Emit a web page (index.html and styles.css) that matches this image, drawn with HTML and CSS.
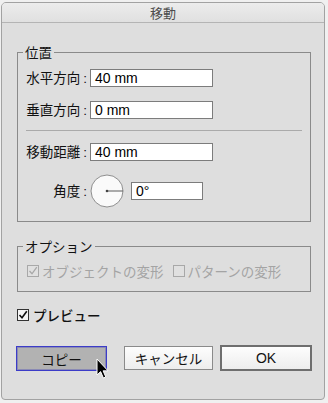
FILE: index.html
```html
<!DOCTYPE html>
<html lang="ja">
<head>
<meta charset="utf-8">
<link rel="stylesheet" href="styles.css">
</head>
<body>
<div class="page">
  <div class="window">
    <div class="titlebar">移動</div>
    <div class="content">
      <fieldset class="group pos">
        <legend>位置</legend>
        <div class="row"><span class="lbl">水平方向<span class="colon">:</span></span><span class="field">40 mm</span></div>
        <div class="row r2"><span class="lbl">垂直方向<span class="colon">:</span></span><span class="field">0 mm</span></div>
        <div class="sep"></div>
        <div class="row"><span class="lbl">移動距離<span class="colon">:</span></span><span class="field">40 mm</span></div>
        <div class="row angle">
          <span class="lbl">角度<span class="colon">:</span></span>
          <svg class="dial" width="34" height="34" viewBox="0 0 34 34">
            <circle cx="17" cy="17" r="16" fill="#fafafa" stroke="#8e8e8e" stroke-width="1"/>
            <line x1="17" y1="17" x2="33" y2="17" stroke="#5a5a5a" stroke-width="1.2"/>
            <circle cx="17" cy="17" r="1.3" fill="#444"/>
          </svg>
          <span class="field small">0°</span>
        </div>
      </fieldset>
      <fieldset class="group opt">
        <legend>オプション</legend>
        <div class="checks">
          <span class="chk dis">
            <svg width="12" height="12" viewBox="0 0 12 12"><rect x="0.5" y="0.5" width="11" height="11" fill="#e0e0e0" stroke="#a8a8a8"/><path d="M2.5 6 L5 8.8 L9.8 2.2" fill="none" stroke="#a8a8a8" stroke-width="1.3"/></svg>
            オブジェクトの変形
          </span>
          <span class="chk dis second">
            <svg width="12" height="12" viewBox="0 0 12 12"><rect x="0.5" y="0.5" width="11" height="11" fill="#e0e0e0" stroke="#a8a8a8"/></svg>
            パターンの変形
          </span>
        </div>
      </fieldset>
      <div class="chk preview">
        <svg width="12" height="12" viewBox="0 0 12 12"><rect x="0.5" y="0.5" width="11" height="11" fill="#f6f6f6" stroke="#333"/><path d="M2.5 6 L5 8.8 L9.8 2.2" fill="none" stroke="#111" stroke-width="1.6"/></svg>
        プレビュー
      </div>
      <div class="buttons">
        <span class="btn copy">コピー</span>
        <span class="btn cancel">キャンセル</span>
        <span class="btn ok">OK</span>
      </div>
    </div>
    <svg class="cursor" width="14" height="22" viewBox="0 0 14 22">
      <path d="M1 1 L1 17 L4.6 13.6 L7.4 20 L9.8 19 L7.1 12.8 L12 12.8 Z" fill="#000" stroke="#fff" stroke-width="1" stroke-linejoin="round"/>
    </svg>
  </div>
</div>
</body>
</html>
```

FILE: styles.css
```css
* { box-sizing: border-box; }
html, body { margin: 0; padding: 0; }
body {
  background: #f0f0f0;
  font-family: "Liberation Sans", "Noto Sans CJK JP", sans-serif;
  color: #111;
}
.page {
  width: 328px;
  height: 403px;
  padding: 2px 3px 3px 1px;
}
.window {
  position: relative;
  width: 324px;
  height: 398px;
  background: #dedede;
  border: 1px solid #a2a2a2;
  border-radius: 5px 5px 4px 4px;
  overflow: hidden;
}
.titlebar {
  height: 20px;
  border-bottom: 1px solid #b4b4b4;
  background: linear-gradient(#ececec, #e0e0e0);
  text-align: center;
  font-size: 13px;
  line-height: 19px;
  color: #4d4d4d;
  font-family: "Noto Sans CJK JP", sans-serif;
}
.content {
  padding: 0 13px 0 15px;
  display: flex;
  flex-direction: column;
}
.group {
  margin: 0;
  border: 1px solid #8a8a8a;
  padding: 9px 8px 14px 8px;
  min-width: 0;
}
.group legend {
  padding: 0 2px;
  margin-left: -3px;
  font-size: 13.5px;
  line-height: 16px;
  font-family: "Noto Sans CJK JP", sans-serif;
}
.pos { margin-top: 21px; }
.opt { margin-top: 16px; padding-bottom: 12px; }
.row {
  display: flex;
  align-items: center;
  height: 18px;
}
.r2 { margin-top: 14px; }
.lbl {
  width: 63px;
  text-align: right;
  padding-right: 2px;
  font-size: 13.5px;
  line-height: 16px;
  white-space: nowrap;
  font-family: "Noto Sans CJK JP", sans-serif;
}
.colon {
  margin-left: 3px;
  font-family: "Liberation Sans", sans-serif;
}
.field {
  margin-left: 1px;
  width: 123px;
  height: 18px;
  background: #fff;
  border: 1px solid #7c7c7c;
  padding-left: 4px;
  font-size: 14px;
  line-height: 16px;
  color: #000;
}
.field.small {
  width: 72px;
  margin-left: 7px;
}
.sep {
  height: 1px;
  background: #aaaaaa;
  margin: 11px 0 12px;
}
.row.angle {
  height: 33px;
  margin-top: 13px;
}
.dial {
  display: block;
  margin-left: 1px;
  width: 34px;
  height: 34px;
}
.checks {
  display: flex;
  height: 16px;
  align-items: center;
  padding-left: 1px;
}
.chk {
  display: flex;
  align-items: center;
  gap: 3px;
  font-size: 13.5px;
  line-height: 16px;
  font-family: "Noto Sans CJK JP", sans-serif;
}
.chk svg { display: block; flex: none; }
.chk.dis { color: #a4a4a4; }
.chk.second { margin-left: 9px; }
.preview {
  margin-top: 15px;
  height: 16px;
  gap: 4px;
  color: #111;
  font-weight: 500;
}
.buttons {
  display: flex;
  align-items: flex-start;
  margin: 22px -1px 0;
  height: 26px;
}
.btn {
  display: flex;
  align-items: center;
  justify-content: center;
  font-size: 13.5px;
  color: #111;
}
.copy {
  width: 91px;
  height: 25px;
  margin-top: 1px;
  background: #b2b2b2;
  border: 1px solid #3c3cc8;
  box-shadow: inset 0 0 0 1px #8a8ab4;
}
.cancel {
  width: 89px;
  height: 24px;
  margin-top: 1px;
  margin-left: 17px;
  border: 1px solid #8a8a8a;
  background: linear-gradient(#fdfdfd, #ededed);
}
.ok {
  width: 92px;
  height: 26px;
  margin-left: 7px;
  border: 2px solid #6e6e6e;
  background: linear-gradient(#fdfdfd, #ededed);
  font-size: 14px;
}
.cursor {
  position: absolute;
  left: 94px;
  top: 355px;
}
```
